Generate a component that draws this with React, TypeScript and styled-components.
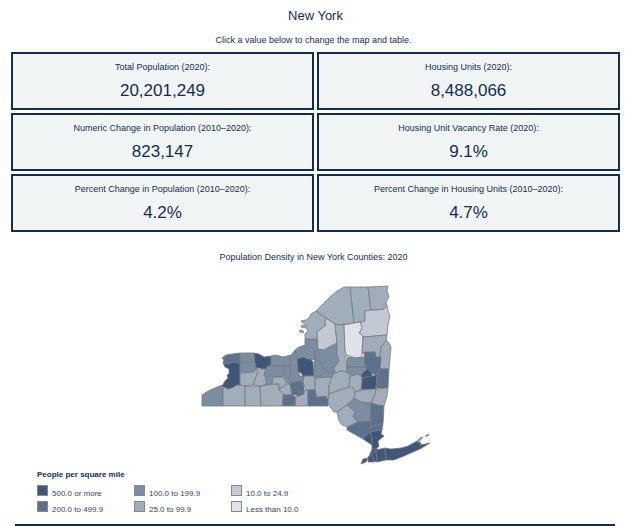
import React, { useState } from "react";
import styled, { createGlobalStyle } from "styled-components";

const navy = "#112e51";

const GlobalStyle = createGlobalStyle`
  * { box-sizing: border-box; }
  body {
    margin: 0;
    background: #fff;
    color: ${navy};
    font-family: "Liberation Sans", Arial, sans-serif;
  }
`;

const Page = styled.main`
  display: flex;
  flex-direction: column;
  padding: 8px 10px 0 11px;
`;

const Title = styled.h1`
  margin: 0;
  font-size: 13px;
  font-weight: 400;
  line-height: 16px;
  text-align: center;
`;

const Hint = styled.p`
  margin: 10px 4px 6px 0;
  font-size: 9px;
  line-height: 12px;
  text-align: center;
`;

const CardGrid = styled.div`
  display: grid;
  grid-template-columns: 1fr 1fr;
  gap: 3px;
`;

const Card = styled.button`
  display: flex;
  flex-direction: column;
  align-items: center;
  gap: 9px;
  padding: 7px 4px 8px;
  border: 2px solid ${navy};
  border-radius: 0;
  background: #f1f5f6;
  color: inherit;
  font-family: inherit;
  cursor: pointer;
`;

const CardLabel = styled.span`
  font-size: 9px;
  line-height: 12px;
`;

const CardValue = styled.span`
  font-size: 17px;
  line-height: 18px;
`;

const MapTitle = styled.h2`
  margin: 19px 4px 0 0;
  font-size: 9px;
  font-weight: 400;
  line-height: 12px;
  text-align: center;
`;

const CountyMap = styled.svg`
  display: block;
  align-self: center;
  width: 232px;
  height: 182px;
  margin-top: 21px;
  stroke: #777a7d;
  stroke-width: 0.8;
  stroke-linejoin: round;
`;

const Legend = styled.section`
  margin: 3px 0 0 26px;
`;

const LegendTitle = styled.h3`
  margin: 0 0 4px;
  font-size: 8px;
  font-weight: 700;
  line-height: 12px;
`;

const LegendList = styled.ul`
  display: grid;
  grid-template-columns: repeat(3, 97px);
  grid-template-rows: repeat(2, 13px);
  grid-auto-flow: column;
  row-gap: 3px;
  margin: 0;
  padding: 0;
  list-style: none;
`;

const LegendItem = styled.li`
  display: flex;
  gap: 4px;
  color: #2b4566;
  font-size: 8px;
  line-height: 8px;
  align-items: flex-end;
`;

const Swatch = styled.span<{ $fill: string }>`
  align-self: flex-start;
  width: 11px;
  height: 11px;
  border: 1px solid #85898e;
  background: ${(p) => p.$fill};
`;

const Rule = styled.hr`
  width: auto;
  margin: 10px 5px 0 4px;
  border: 0;
  border-top: 2px solid ${navy};
`;

const stats = [
  ["Total Population (2020):", "20,201,249"],
  ["Housing Units (2020):", "8,488,066"],
  ["Numeric Change in Population (2010–2020):", "823,147"],
  ["Housing Unit Vacancy Rate (2020):", "9.1%"],
  ["Percent Change in Population (2010–2020):", "4.2%"],
  ["Percent Change in Housing Units (2010–2020):", "4.7%"],
];

const classes = [
  { label: "500.0 or more", fill: "#3f5777" },
  { label: "200.0 to 499.9", fill: "#5c728c" },
  { label: "100.0 to 199.9", fill: "#7b8da1" },
  { label: "25.0 to 99.9", fill: "#a0aebb" },
  { label: "10.0 to 24.9", fill: "#c1cad4" },
  { label: "Less than 10.0", fill: "#dfe3e8" },
];

// Each county: name, index into the density classes, outline points.
const counties: [string, number, string][] = [
  ["Chautauqua", 2, "201,395 207,391 214,388 221,385 222,386 222,406 201,406"],
  ["Cattaraugus", 3, "222,386 227,389 233,387 235,385 239,385 244,386 244,406 222,406"],
  ["Allegany", 3, "244,386 259,386 260,406 244,406"],
  ["Steuben", 3, "259,386 264,385 271,384 278,384 278,390 284,395 282,395 282,406 260,406"],
  ["Erie", 0, "222,363 227,364 232,362 239,363 239,385 235,385 233,387 227,389 221,386 224,381 227,378 226,375 228,374 228,369 224,367"],
  ["Niagara", 1, "221,358 225,355 231,354 239,353 239,363 232,362 227,364 222,363 223,360"],
  ["Orleans", 2, "239,353 253,353 254,362 239,363"],
  ["Genesee", 2, "239,363 254,362 255,368 253,372 239,373"],
  ["Monroe", 0, "253,353 258,354 263,357 270,356 270,366 267,366 265,369 260,369 259,368 255,368 254,362"],
  ["Wyoming", 3, "239,373 253,372 255,368 257,371 255,377 252,385 244,386 239,385"],
  ["Livingston", 3, "255,368 259,368 260,369 265,369 263,375 265,378 264,380 266,381 264,385 259,386 252,385 255,377 257,371"],
  ["Wayne", 2, "270,356 275,355 282,357 290,355 290,366 270,366"],
  ["Ontario", 2, "265,369 267,366 284,366 283,377 272,377 271,384 264,385 266,381 264,380 265,378 263,375"],
  ["Yates", 3, "272,377 283,377 285,384 281,388 278,388 278,384 271,384"],
  ["Seneca", 2, "283,366 290,366 289,378 290,382 287,385 284,379"],
  ["Schuyler", 3, "278,388 281,388 285,384 289,384 291,395 284,395 278,390"],
  ["Chemung", 1, "282,395 291,395 295,397 294,406 282,406"],
  ["Cayuga", 2, "290,355 294,350 297,358 297,371 299,376 303,376 303,382 297,382 290,383 289,378"],
  ["Tompkins", 1, "290,383 297,381 302,382 303,387 303,394 298,397 295,395 291,395 289,384"],
  ["Tioga", 3, "295,397 298,396 303,394 303,390 307,390 307,406 294,406"],
  ["Onondaga", 0, "296,359 302,357 307,359 310,359 312,362 313,376 302,376 300,373 297,372"],
  ["Cortland", 3, "303,376 313,376 314,390 305,390 302,382"],
  ["Broome", 1, "307,390 314,390 316,397 325,396 327,399 327,406 307,406"],
  ["Oswego", 2, "294,350 298,347 304,345 304,339 316,339 317,349 314,351 314,360 310,359 307,359 302,357 296,359"],
  ["Madison", 2, "314,360 320,362 322,367 327,372 333,373 331,377 314,378 313,376 313,362"],
  ["Chenango", 3, "314,378 331,377 330,382 328,385 328,398 325,396 316,397 314,390"],
  ["Oneida", 2, "317,349 323,350 328,347 336,343 336,354 338,361 333,368 334,373 327,372 322,367 320,362 314,360 314,351"],
  ["Jefferson", 3, "315,311 325,318 324,323 325,325 320,329 316,332 316,339 304,339 304,334 307,331 305,328 300,327 301,325 306,326 302,323 300,321 305,320 308,318 310,314"],
  ["Jefferson islands", 3, "298,331 301,330 303,332 301,333"],
  ["Lewis", 4, "325,318 334,324 336,343 328,347 323,350 317,349 316,332 320,329 325,325 324,323"],
  ["St. Lawrence", 3, "315,311 322,304 330,296 336,291 343,287 349,287 353,323 337,325 334,324"],
  ["Franklin", 3, "349,287 367,287 370,310 364,311 364,321 353,323"],
  ["Clinton", 3, "367,287 387,286 386,291 388,297 385,302 386,306 383,309 377,310 370,310"],
  ["Essex", 4, "364,311 370,310 377,310 383,309 386,305 387,311 389,315 387,325 386,335 362,337 360,334 358,333 361,328 359,323 364,321"],
  ["Herkimer", 3, "334,324 337,325 343,324 344,350 346,355 344,358 346,362 346,372 340,371 334,373 333,368 338,361 336,354 336,343"],
  ["Hamilton", 5, "343,325 359,322 361,328 358,333 360,334 362,337 361,357 355,358 345,355 344,350"],
  ["Warren", 3, "362,337 386,335 385,342 380,347 379,360 375,358 374,352 361,353"],
  ["Washington", 3, "385,340 388,343 390,347 388,369 379,369 379,356 380,347 383,343"],
  ["Saratoga", 1, "363,352 374,352 375,357 380,357 379,369 375,376 371,373 367,371 364,368"],
  ["Fulton", 2, "346,357 355,358 363,357 364,367 346,367"],
  ["Montgomery", 2, "346,367 364,367 366,370 361,375 352,376 346,373"],
  ["Schenectady", 0, "360,375 366,369 371,373 371,377 361,378"],
  ["Albany", 0, "361,378 376,375 375,389 360,390"],
  ["Rensselaer", 1, "379,369 388,369 387,388 375,388 376,375"],
  ["Otsego", 3, "334,373 340,371 346,372 349,376 348,387 339,390 328,394 328,385 331,377"],
  ["Schoharie", 3, "349,376 358,374 361,378 360,390 354,392 352,388 348,387"],
  ["Delaware", 3, "328,394 339,390 348,387 352,388 354,392 354,398 345,405 336,412 333,412 327,404"],
  ["Greene", 3, "354,392 361,390 375,389 374,394 370,403 360,402 353,398"],
  ["Columbia", 3, "375,389 387,388 386,396 383,406 376,405 370,403 374,394"],
  ["Sullivan", 3, "336,412 346,405 354,412 352,417 357,422 347,427 341,425 338,421"],
  ["Ulster", 2, "346,405 353,398 360,402 370,403 369,422 357,422 352,417 354,412"],
  ["Dutchess", 1, "370,403 376,405 383,406 382,424 369,426"],
  ["Putnam", 1, "369,426 382,424 381,430 369,432"],
  ["Orange", 1, "346,427 357,422 369,421 369,432 362,439 346,430"],
  ["Rockland", 0, "362,439 369,432 371,438 371,445"],
  ["Westchester", 0, "369,432 381,430 380,434 383,436 377,441 378,446 374,451 371,451 371,438"],
  ["Bronx", 0, "371,449 376,449 377,453 371,455 370,452"],
  ["Manhattan", 0, "370,452 372,454 369,459 368,456"],
  ["Queens", 0, "370,455 375,450 376,462 370,461"],
  ["Brooklyn", 0, "367,457 371,455 373,462 367,462"],
  ["Staten Island", 0, "360,464 362,459 367,458 365,462"],
  ["Nassau", 0, "375,450 384,448 385,460 376,462"],
  ["Suffolk", 0, "384,448 390,449 400,448 407,446 416,441 420,443 419,445 429,443 419,449 403,456 393,460 385,460"],
  ["North Fork", 3, "416,441 419,438 422,437 417,443"],
  ["Fishers Island", 3, "424,436 428,434 427,436"],
];

export default function App() {
  const [selected, setSelected] = useState(0);
  return (
    <>
      <GlobalStyle />
      <Page>
        <Title>New York</Title>
        <Hint>Click a value below to change the map and table.</Hint>
        <CardGrid>
          {stats.map(([label, value], i) => (
            <Card
              key={label}
              type="button"
              aria-pressed={selected === i}
              onClick={() => setSelected(i)}
            >
              <CardLabel>{label}</CardLabel>
              <CardValue>{value}</CardValue>
            </Card>
          ))}
        </CardGrid>
        <MapTitle>Population Density in New York Counties: 2020</MapTitle>
        <CountyMap viewBox="199 284 232 182" role="img" aria-label="New York counties">
          {counties.map(([name, level, points]) => (
            <polygon key={name} points={points} fill={classes[level].fill} />
          ))}
        </CountyMap>
        <Legend>
          <LegendTitle>People per square mile</LegendTitle>
          <LegendList>
            {[0, 1, 2, 3, 4, 5].map((i) => (
              <LegendItem key={classes[i].label}>
                <Swatch $fill={classes[i].fill} />
                {classes[i].label}
              </LegendItem>
            ))}
          </LegendList>
        </Legend>
        <Rule />
      </Page>
    </>
  );
}
